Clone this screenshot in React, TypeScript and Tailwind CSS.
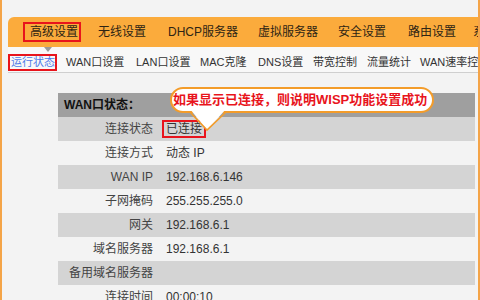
export default function App() {
  const navItems = [
    { label: '无线设置', w: 'w-[70px]' },
    { label: 'DHCP服务器', w: 'w-[90px]' },
    { label: '虚拟服务器', w: 'w-[80px]' },
    { label: '安全设置', w: 'w-[70px]' },
    { label: '路由设置', w: 'w-[65px]' },
    { label: '系统工具', w: 'w-[60px]' },
  ];

  const subItems = [
    { label: 'WAN口设置', w: 'w-[70px]' },
    { label: 'LAN口设置', w: 'w-[64px]' },
    { label: 'MAC克隆', w: 'w-[58px]' },
    { label: 'DNS设置', w: 'w-[55px]' },
    { label: '带宽控制', w: 'w-[54px]' },
    { label: '流量统计', w: 'w-[53px]' },
    { label: 'WAN速率控制', w: 'w-[80px]' },
  ];

  const rows = [
    { label: '连接状态', value: '已连接', mark: true },
    { label: '连接方式', value: '动态 IP' },
    { label: 'WAN IP', value: '192.168.6.146' },
    { label: '子网掩码', value: '255.255.255.0' },
    { label: '网关', value: '192.168.6.1' },
    { label: '域名服务器', value: '192.168.6.1' },
    { label: '备用域名服务器', value: '' },
    { label: '连接时间', value: '00:00:10' },
  ];

  return (
    <div className="relative w-[480px] h-[300px] overflow-hidden bg-[#f3f3f3] border-l-2 border-r-2 border-[#f4a448] font-['Liberation_Sans','Noto_Sans_CJK_SC',sans-serif] text-[#333]">
      <div className="h-[17px]" />

      {/* main tabs */}
      <div className="ml-[6px] h-[30px] bg-[#fbab3c] rounded-tl-[6px] flex items-center pl-[15px] text-[12px] text-[#2e2414] whitespace-nowrap">
        <div className="relative w-[75px] h-full flex items-center shrink-0">
          <span className="h-[20px] w-[58px] border-2 border-[#e8141c] pl-[5px] flex items-center">高级设置</span>
          <span className="absolute top-full left-[21px] w-0 h-0 border-x-[4px] border-x-transparent border-t-[5px] border-t-[#9a9a9a]" />
        </div>
        {navItems.map((item) => (
          <div key={item.label} className={`${item.w} shrink-0`}>
            {item.label}
          </div>
        ))}
      </div>

      {/* sub tabs */}
      <div className="ml-[6px] h-[26px] bg-[#f8f8f8] border-b border-[#cfcfcf] flex items-end pb-[1px] text-[11px] whitespace-nowrap">
        <div className="w-[58px] shrink-0">
          <span className="h-[17px] w-[49px] border-2 border-[#e8141c] pl-[1px] flex items-center text-[#4f7be8]">运行状态</span>
        </div>
        {subItems.map((item) => (
          <div key={item.label} className={`${item.w} h-[17px] flex items-center shrink-0`}>
            {item.label}
          </div>
        ))}
      </div>

      {/* status table */}
      <div className="pl-[56px] pt-[20px] text-[12px]">
        <div className="w-[417px]">
          <div className="h-[24px] bg-[#9f9f9f] flex items-center pl-[6px] font-bold text-[#111]">WAN口状态：</div>
          {rows.map((row, i) => (
            <div
              key={row.label}
              className={`h-[24px] flex items-center ${i % 2 === 0 ? 'bg-[#d4d4d4]' : 'bg-[#f3f3f3]'}`}
            >
              <div className="w-[100px] text-right pr-[5px] text-[#444] whitespace-nowrap">{row.label}</div>
              <div className="pl-[8px]">
                {row.mark ? (
                  <span className="-ml-[4px] h-[18px] px-[2px] border-2 border-[#e8141c] inline-flex items-center">
                    {row.value}
                  </span>
                ) : (
                  row.value
                )}
              </div>
            </div>
          ))}
        </div>
      </div>

      {/* callout */}
      <div className="absolute left-[168px] top-[87px] w-[264px] h-[26px] rounded-full border-2 border-[#f39c2a] bg-white flex items-center pl-[1px] text-[13px] font-bold text-[#e8141c] whitespace-nowrap">
        如果显示已连接，则说明WISP功能设置成功
      </div>
      <svg className="absolute left-[186px] top-[108px]" width="42" height="26" viewBox="0 0 42 26">
        <polygon points="2,1 38,1 19,22" fill="#ffffff" />
        <path d="M2 4 L19 22 L38 4" fill="none" stroke="#f39c2a" strokeWidth="1.6" />
      </svg>
    </div>
  );
}
